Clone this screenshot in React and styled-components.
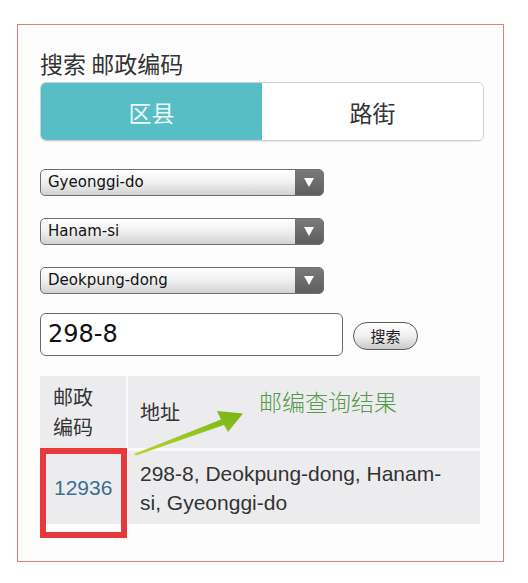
import React from 'react';
import styled, { createGlobalStyle } from 'styled-components';

const GlobalStyle = createGlobalStyle`
  html, body {
    margin: 0;
    padding: 0;
    background: #ffffff;
  }
  body {
    font-family: "Noto Sans CJK SC", "Noto Sans", sans-serif;
    color: #333;
  }
`;

const Frame = styled.div`
  box-sizing: border-box;
  margin: 24px 0 0 17px;
  width: 487px;
  height: 538px;
  border: 1px solid #d7857b;
  background: #fdfdfd;
  padding: 24px 0 0 22px;
  display: flex;
  flex-direction: column;
`;

const Title = styled.div`
  font-size: 23px;
  line-height: 28px;
  color: #333;
  margin-bottom: 5px;
`;

const Segment = styled.div`
  display: flex;
  width: 444px;
  height: 59px;
  box-sizing: border-box;
  border: 1px solid #cfcfcf;
  border-radius: 6px;
  overflow: hidden;
  margin-bottom: 28px;
  box-shadow: 0 1px 1px rgba(0, 0, 0, 0.08);
`;

const SegItem = styled.div`
  flex: 1;
  display: flex;
  align-items: center;
  justify-content: center;
  font-size: 23px;
  background: ${p => (p.$active ? '#58bec5' : '#ffffff')};
  color: ${p => (p.$active ? '#eef8f8' : '#333')};
`;

const SelectBox = styled.div`
  box-sizing: border-box;
  width: 284px;
  height: 27px;
  display: flex;
  border: 1px solid #6e6e6e;
  border-radius: 5px;
  overflow: hidden;
  margin-bottom: ${p => p.$gap}px;
  background: linear-gradient(#ffffff, #f2f2f2 45%, #d2d2d2);
`;

const SelectText = styled.div`
  flex: 1;
  padding-left: 7px;
  font-family: "DejaVu Sans", Verdana, sans-serif;
  font-size: 15px;
  line-height: 25px;
  color: #111;
`;

const SelectArrow = styled.div`
  width: 28px;
  display: flex;
  align-items: center;
  justify-content: center;
  background: linear-gradient(#7a7a7a, #5e5e5e);
  &::after {
    content: "";
    border-left: 5px solid transparent;
    border-right: 5px solid transparent;
    border-top: 9px solid #ffffff;
  }
`;

const SearchRow = styled.div`
  display: flex;
  align-items: center;
  gap: 10px;
  margin-bottom: 20px;
`;

const TextInput = styled.div`
  box-sizing: border-box;
  width: 303px;
  height: 43px;
  border: 1.5px solid #6a6a6a;
  border-radius: 6px;
  background: #fff;
  padding-left: 7px;
  font-family: "DejaVu Sans", Verdana, sans-serif;
  font-size: 24px;
  line-height: 40px;
  color: #111;
`;

const SearchButton = styled.div`
  box-sizing: border-box;
  width: 65px;
  height: 28px;
  border: 1px solid #5a5a5a;
  border-radius: 14px;
  background: linear-gradient(#ffffff, #f0f0f0 50%, #c9c9c9);
  display: flex;
  align-items: center;
  justify-content: center;
  font-size: 15px;
  color: #222;
  margin-top: 2px;
`;

const TableWrap = styled.div`
  position: relative;
  width: 440px;
`;

const Table = styled.table`
  width: 440px;
  table-layout: fixed;
  border-collapse: collapse;
  background: #ececee;
`;

const HeadCell = styled.th`
  text-align: left;
  font-weight: normal;
  font-size: 20px;
  line-height: 30px;
  color: #333;
  height: 72px;
  padding: 0 0 0 ${p => p.$pad}px;
  vertical-align: middle;
  border-right: 2px solid #fafafa;
  border-bottom: 3px solid #fafafa;
  &:last-child { border-right: none; }
`;

const Cell = styled.td`
  font-family: "Liberation Sans", Arial, sans-serif;
  font-size: 21px;
  line-height: 29px;
  height: 73px;
  padding: 0 20px 0 ${p => p.$pad}px;
  color: ${p => (p.$link ? '#3b6e96' : '#333')};
  vertical-align: middle;
  border-right: 2px solid #fafafa;
  &:last-child { border-right: none; }
`;

const RedBox = styled.div`
  position: absolute;
  left: 0;
  top: 72px;
  width: 87px;
  height: 90px;
  box-sizing: border-box;
  border: 6px solid #e5393b;
`;

const Note = styled.div`
  position: absolute;
  left: 219px;
  top: 12px;
  font-size: 23px;
  font-weight: 300;
  line-height: 26px;
  color: #56994f;
  white-space: nowrap;
`;

const ArrowSvg = styled.svg`
  position: absolute;
  left: 0;
  top: 0;
  overflow: visible;
`;

export default function App() {
  return (
    <>
      <GlobalStyle />
      <Frame>
        <Title>搜索 邮政编码</Title>
        <Segment>
          <SegItem $active>区县</SegItem>
          <SegItem>路街</SegItem>
        </Segment>
        <SelectBox $gap={22}>
          <SelectText>Gyeonggi-do</SelectText>
          <SelectArrow />
        </SelectBox>
        <SelectBox $gap={22}>
          <SelectText>Hanam-si</SelectText>
          <SelectArrow />
        </SelectBox>
        <SelectBox $gap={19}>
          <SelectText>Deokpung-dong</SelectText>
          <SelectArrow />
        </SelectBox>
        <SearchRow>
          <TextInput>298-8</TextInput>
          <SearchButton>搜索</SearchButton>
        </SearchRow>
        <TableWrap>
          <Table>
            <colgroup>
              <col style={{ width: 87 }} />
              <col />
            </colgroup>
            <thead>
              <tr>
                <HeadCell $pad={13}>邮政<br />编码</HeadCell>
                <HeadCell $pad={12}>地址</HeadCell>
              </tr>
            </thead>
            <tbody>
              <tr>
                <Cell $pad={14} $link>12936</Cell>
                <Cell $pad={12}>298-8, Deokpung-dong, Hanam-si, Gyeonggi-do</Cell>
              </tr>
            </tbody>
          </Table>
          <RedBox />
          <ArrowSvg width="440" height="150">
            <defs>
              <linearGradient id="ag" x1="0" y1="1" x2="1" y2="0">
                <stop offset="0" stopColor="#b6d62a" />
                <stop offset="1" stopColor="#78b416" />
              </linearGradient>
            </defs>
            <polygon
              points="94,78 181,43.5 177,35 203,37.5 188,56 184,49 96,79.5"
              fill="url(#ag)"
            />
          </ArrowSvg>
          <Note>邮编查询结果</Note>
        </TableWrap>
      </Frame>
    </>
  );
}
